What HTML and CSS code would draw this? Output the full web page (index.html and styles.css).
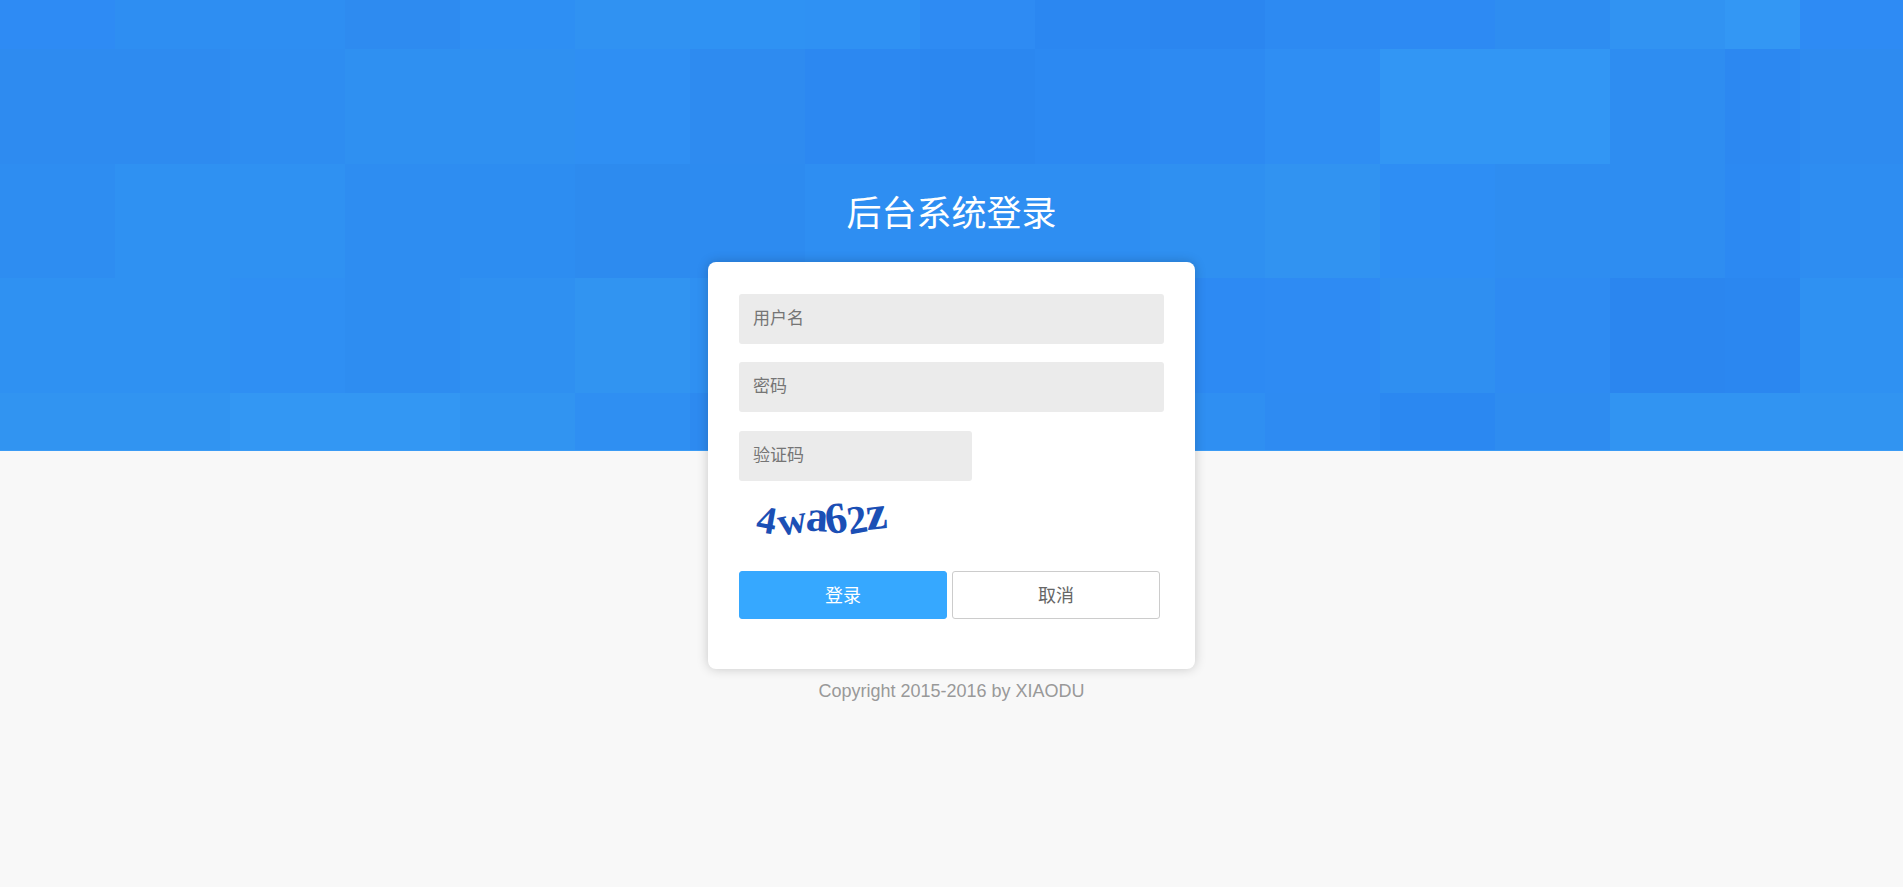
FILE: index.html
```html
<!DOCTYPE html>
<html lang="zh-CN">
<head>
    <meta charset="UTF-8">
    <meta name="viewport" content="width=device-width, initial-scale=1.0">
    <title>后台系统登录</title>
    <link rel="stylesheet" href="styles.css">
</head>
<body>
    <svg class="banner" aria-hidden="true">
        <defs>
            <pattern id="mosaic" width="1800" height="451" patternUnits="userSpaceOnUse"></pattern>
        </defs>
        <rect width="100%" height="451" fill="url(#mosaic)"/>
        <rect y="450" width="100%" height="1" fill="#3a9bf5"/>
    </svg>

    <div class="login">
        <h1>后台系统登录</h1>
        <form class="login-box" onsubmit="return false">
            <input type="text" class="field" name="username" placeholder="用户名" aria-label="用户名">
            <input type="password" class="field" name="password" placeholder="密码" aria-label="密码">
            <input type="text" class="field field-code" name="code" placeholder="验证码" aria-label="验证码">
            <svg class="captcha" viewBox="0 0 150 60" role="img" aria-label="验证码图片">
                <text x="18" y="44" font-size="39" transform="rotate(10 27 32)">4</text>
                <text x="39" y="45" font-size="40" transform="rotate(-10 52 34)">w</text>
                <text x="67" y="42" font-size="44" transform="rotate(4 76 32)">a</text>
                <text x="86" y="44" font-size="44" transform="rotate(-8 96 30)">6</text>
                <text x="108" y="44" font-size="40" transform="rotate(-10 118 30)">2</text>
                <text x="127" y="40" font-size="48" transform="rotate(-6 136 28)">z</text>
            </svg>
            <div class="buttons">
                <button type="submit" class="btn btn-primary">登录</button>
                <button type="reset" class="btn">取消</button>
            </div>
        </form>
        <p class="copyright">Copyright 2015-2016 by XIAODU</p>
    </div>

    <script src="mosaic.js"></script>
</body>
</html>
```
FILE: styles.css
```css
* {
    box-sizing: border-box;
}
body {
    margin: 0;
    background-color: #f8f8f8;
    font-family: "Liberation Sans", Arial, "Noto Sans CJK SC", sans-serif;
    font-size: 18px;
}
.banner {
    position: absolute;
    top: 0;
    left: 0;
    z-index: -1;
    width: 100%;
    height: 451px;
}
.login {
    max-width: 487px;
    margin: 0 auto;
    padding-top: 182px;
    text-align: center;
}
h1 {
    margin: 0 0 16px;
    font-size: 35px;
    font-weight: 400;
    line-height: 64px;
    color: #fff;
}
.login-box {
    display: flex;
    flex-direction: column;
    align-items: flex-start;
    padding: 32px 31px 50px;
    border-radius: 8px;
    background-color: #fff;
    box-shadow: 0 0 12px rgba(0, 0, 0, 0.2);
}
.field {
    width: 100%;
    height: 50px;
    margin: 0 0 18px;
    padding: 0 14px;
    border: none;
    border-radius: 3px;
    background-color: #ebebeb;
    font-family: inherit;
    font-size: 17px;
    color: #333;
}
.field::placeholder {
    color: #757575;
}
.field-code {
    width: 233px;
    margin: 1px 0 8px;
}
.captcha {
    width: 150px;
    height: 60px;
    margin-bottom: 22px;
    overflow: visible;
    fill: #1b4fb5;
    font-family: "Liberation Serif", serif;
    font-weight: 700;
}
.buttons {
    display: flex;
    gap: 5px;
}
.btn {
    width: 208px;
    height: 48px;
    padding: 0 0 2px;
    border: 1px solid #ccc;
    border-radius: 3px;
    background-color: #fff;
    font-family: inherit;
    font-size: 18px;
    color: #666;
    cursor: pointer;
}
.btn-primary {
    border-color: #36a8ff;
    background-color: #36a8ff;
    color: #fff;
}
.copyright {
    margin: 8px 0 0;
    line-height: 28px;
    color: #999;
}
```
FILE: mosaic.js
```javascript
// banner tiles: 115px squares, the pattern repeats every 1800px
const rows = [
    { y: 0, h: 49, colors: '2e8bf4 2e8ef2 2e8ef2 2e8bf0 2e8ff3 3092f2 2f92f3 2f91f3 2e8bf3 2b87f1 2b86f0 2d8af2 2d8af3 2e8df1 3193f2 3397f4' },
    { y: 49, h: 115, colors: '2e8bf0 2e8bf0 2e8df1 2f90f1 2f90f1 2f8ff3 2e8bf0 2c88f1 2b87f0 2c89f2 2d8af2 2f8ef3 3296f4 3296f4 2e8df1 2c88f1' },
    { y: 164, h: 114, colors: '2e8df1 2f91f2 2f91f2 2e8df1 2d8df1 2d8bef 2d8bf0 2e8ef2 2e8ef2 2e8ef2 2f90f1 3193f1 2e8ef4 2e8df1 2e8df1 2c89f2' },
    { y: 278, h: 115, colors: '2f91f2 2f91f2 2f8ff3 2e8df1 2f90f1 3194f1 2f90f2 2e8ef2 2e8ef2 2e8ef2 2d8af3 2e8bf3 2f8ff1 2e8bf2 2b86ef 2b87f0' },
    { y: 393, h: 58, colors: '3194f1 3194f1 3397f3 3397f3 3194f1 2f8ff2 2d8af0 2e8bf2 2e8bf2 2e8bf2 2f8ff2 2e8bf2 2b88f1 2e8cf0 3194f2 3194f2' }
];

const pattern = document.getElementById('mosaic');
rows.forEach(row => {
    row.colors.split(' ').forEach((color, i) => {
        const tile = document.createElementNS('http://www.w3.org/2000/svg', 'rect');
        tile.setAttribute('x', i * 115);
        tile.setAttribute('y', row.y);
        tile.setAttribute('width', 115);
        tile.setAttribute('height', row.h);
        tile.setAttribute('fill', '#' + color);
        pattern.appendChild(tile);
    });
});
```
